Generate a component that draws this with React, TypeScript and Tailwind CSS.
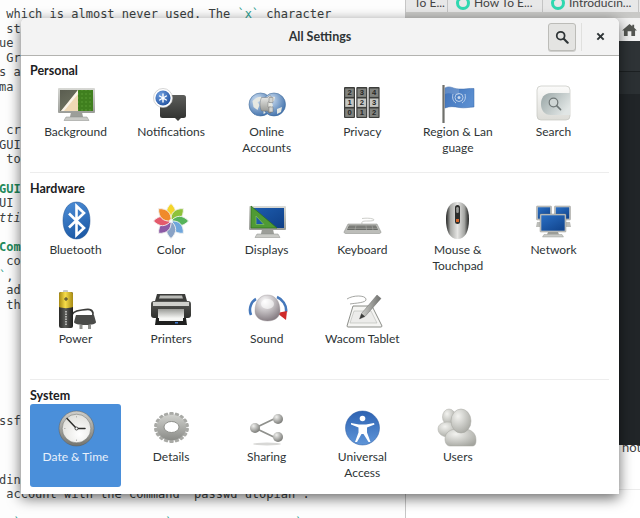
import type { ReactNode } from "react";

const Icon = ({ children }: { children: ReactNode }) => (
  <svg viewBox="0 0 40 40" className="w-10 h-10 shrink-0 overflow-visible">
    {children}
  </svg>
);

const Grad = ({ id, a, b, x2 = 0, y2 = 1 }: { id: string; a: string; b: string; x2?: number; y2?: number }) => (
  <linearGradient id={id} x1="0" y1="0" x2={x2} y2={y2}>
    <stop offset="0" stopColor={a} />
    <stop offset="1" stopColor={b} />
  </linearGradient>
);

const Ball = ({ id, a, b, fx = 0.35, fy = 0.3 }: { id: string; a: string; b: string; fx?: number; fy?: number }) => (
  <radialGradient id={id} cx={fx} cy={fy} r="0.8">
    <stop offset="0" stopColor={a} />
    <stop offset="1" stopColor={b} />
  </radialGradient>
);

const Stand = ({ y = 28 }: { y?: number }) => (
  <g>
    <path d={`M15 ${y}h11l1 5H14z`} fill="#9c9e99" />
    <path d={`M10 ${y + 5}h21l2 3.5H8z`} fill="#c9cac6" stroke="#8b8d88" strokeWidth=".5" />
  </g>
);

const BackgroundIcon = () => (
  <Icon>
    <defs>
      <Grad id="bz" a="#d8d9d5" b="#9b9d98" />
      <Grad id="bl" a="#5a5d50" b="#7c806c" x2={1} />
      <pattern id="gr" width="4" height="4" patternUnits="userSpaceOnUse">
        <rect width="4" height="4" fill="#3f7f1e" />
        <circle cx="2" cy="2" r="1.100" fill="#4e8f2a" />
      </pattern>
    </defs>
    <Stand />
    <rect x="2" y="4" width="37" height="25" rx="1" fill="url(#bz)" />
    <rect x="4" y="6" width="33" height="21" fill="url(#bl)" />
    <rect x="22" y="6" width="15" height="21" fill="url(#gr)" />
    <path d="M22 6v21H5z" fill="#efd9b5" />
    <path d="M22 6L5 27h3L22 10z" fill="#fff" opacity=".7" />
  </Icon>
);

const NotificationsIcon = () => (
  <Icon>
    <defs>
      <Grad id="nb" a="#5d5e5b" b="#333432" />
      <Ball id="nc" a="#6f9fe0" b="#1f4f9d" />
    </defs>
    <rect x="9" y="11" width="26" height="23" rx="2.5" fill="url(#nb)" />
    <path d="M24 34h6l-3 3z" fill="#3a3b39" />
    <circle cx="12" cy="14" r="9.5" fill="#fff" stroke="#b8b8b8" strokeWidth=".6" />
    <circle cx="12" cy="14" r="7.6" fill="url(#nc)" />
    <path d="M12 10v8M8.6 12l6.8 4M8.6 16l6.8-4" stroke="#fff" strokeWidth="1.4" strokeLinecap="round" />
  </Icon>
);

const Globe = ({ cx }: { cx: number }) => (
  <g>
    <circle cx={cx} cy="20.5" r="11.5" fill="url(#og)" stroke="#456f9e" strokeWidth=".6" />
    <path
      d={`M${cx - 8} ${17}c3-3 7-5 9-4l-1 4-3 1 2 3-2 5-4-3zM${cx + 3} ${25}l5-2-1 5-4 2z`}
      fill="#e6e8e2"
    />
  </g>
);

const OnlineIcon = () => (
  <Icon>
    <defs>
      <Ball id="og" a="#cfe0f2" b="#3568a6" />
      <Grad id="op" a="#eeeeec" b="#8f918c" />
    </defs>
    <Globe cx={13.5} />
    <Globe cx={27} />
    <path d="M14.500 13.500h6l1.500-1.500h2v6h-3v5h3v6h-2l-1.500-2h-6c-2-4-2-9.500 0-13.500z" fill="url(#op)" stroke="#666" strokeWidth=".4" />
    <path d="M22 13.500h4v5h-4zM22 23h4v5h-4z" fill="#d3d4d0" stroke="#666" strokeWidth=".4" />
  </Icon>
);

const Dial = ({ x, d }: { x: number; d: string[] }) => (
  <g>
    <rect x={x} y="3" width="11" height="31" rx="1" fill="#3c3d3b" />
    {d.map((n, i) => (
      <g key={i}>
        <rect x={x + 1.2} y={4.5 + i * 10} width="8.6" height="8.4" fill={i === 1 ? "#c6c7c3" : "#81837f"} />
        <text x={x + 5.5} y={11.4 + i * 10} textAnchor="middle" fontSize="7.6" fontWeight="700" fontFamily="Liberation Sans" fill="#272826">
          {n}
        </text>
      </g>
    ))}
  </g>
);

const PrivacyIcon = () => (
  <Icon>
    <Dial x={2} d={["2", "1", "0"]} />
    <Dial x={14.3} d={["3", "2", "1"]} />
    <Dial x={26.6} d={["4", "3", "2"]} />
  </Icon>
);

const RegionIcon = () => (
  <Icon>
    <defs>
      <Grad id="rf" a="#3f72ba" b="#5a8ed0" x2={1} y2={0.4} />
    </defs>
    <path d="M7 4c5-3 8 1 14 1 6 .5 10-1 15-.5V23c-5 0-9 1.500-15 .5-5-1-9-1.500-14 .5z" fill="url(#rf)" stroke="#3a68a8" strokeWidth=".5" />
    <path d="M7 4c5-3 8 1 14 1v6c-6 0-9-3-14-1z" fill="#fff" opacity=".16" />
    <circle cx="21" cy="13.500" r="4" fill="none" stroke="#c9d9ee" strokeWidth=".9" />
    <circle cx="21" cy="13.500" r="1.500" fill="#c9d9ee" />
    <path d="M15 10c-1 4 0 7 3 9M27 10c1 4 0 7-3 9" fill="none" stroke="#c9d9ee" strokeWidth=".9" />
    <rect x="4" y="1" width="2.600" height="38" fill="#6f706c" />
    <rect x="4" y="1" width="1" height="38" fill="#a8a9a5" />
  </Icon>
);

const SearchIcon = () => (
  <Icon>
    <defs>
      <Grad id="sb" a="#fbfbfa" b="#dcdcd7" />
      <Grad id="si" a="#99a6a6" b="#e1e6e5" x2={1} y2={0.6} />
    </defs>
    <rect x="4" y="2" width="33" height="34" rx="4" fill="url(#sb)" stroke="#c4c5c0" strokeWidth=".7" />
    <path d="M37 9H18C11 9 8 14 8 20s3 11 10 11h19z" fill="url(#si)" />
    <circle cx="20.500" cy="18.500" r="4.300" fill="#cfd6d5" stroke="#6e7676" strokeWidth="1.200" />
    <path d="M23.600 21.600l4 4" stroke="#6e7676" strokeWidth="1.500" strokeLinecap="round" />
  </Icon>
);

const BluetoothIcon = () => (
  <Icon>
    <defs>
      <Grad id="bt" a="#4f8fd8" b="#1e5ca8" x2={0.3} />
    </defs>
    <path d="M20.500 0C29 0 34 8 34 18.500S29 37 20.500 37 7 29 7 18.500 12 0 20.500 0z" fill="url(#bt)" stroke="#1c4f8f" strokeWidth=".5" />
    <path d="M13 11.500l15 14.500-7.500 7V4l7.500 7L13 25.500" fill="none" stroke="#fff" strokeWidth="2.600" strokeLinejoin="miter" />
  </Icon>
);

const petals = ["#f4d52b", "#8fc23a", "#57b35a", "#6fa6dc", "#8aa3c6", "#8d5aa5", "#e45a6c", "#f08a2a"];

const ColorIcon = () => (
  <Icon>
    <circle cx="20" cy="19" r="17" fill="#fff" />
    {petals.map((c, i) => (
      <path
        key={c}
        d="M20 19c-6-5-6.500-11.500 0-17.500c6.500 6 6 12.500 0 17.500z"
        fill={c}
        stroke="#f2f2f0"
        strokeWidth=".9"
        transform={`rotate(${i * 45} 20 19)`}
      />
    ))}
    <circle cx="20" cy="19" r="2" fill="#fff" opacity=".7" />
  </Icon>
);

const DisplaysIcon = () => (
  <Icon>
    <defs>
      <Grad id="ds" a="#1d5db0" b="#0f3f86" x2={1} y2={1} />
      <Grad id="bz2" a="#dadbd7" b="#9a9c97" />
    </defs>
    <Stand y={27} />
    <rect x="2" y="4" width="37" height="24" rx="1" fill="url(#bz2)" />
    <rect x="4" y="6" width="33" height="20" fill="url(#ds)" />
    <path d="M4 4l26 22H4z" fill="#4f9a34" stroke="#2f6f1c" strokeWidth=".7" />
    <path d="M9 14l8 8.500H9z" fill="#1b5aa8" stroke="#7fbb5d" strokeWidth=".8" />
  </Icon>
);

const KeyboardIcon = () => (
  <Icon>
    <path d="M20 22c-1-3 2-3 6-3s8-.5 5-2c-3-1-7-1-11-.5" fill="none" stroke="#c0c1bd" strokeWidth=".8" />
    <path d="M6 22h29l4 8c0 1-1 1.500-2 1.500H4c-1 0-2-.5-2-1.500z" fill="#bcbdb9" stroke="#858782" strokeWidth=".5" />
    <path d="M7 23.500h27l2 4.500H5z" fill="#6a6c68" />
    <path d="M7 25h27.500M6 26.500h29M14 23.500l-1 4.500M24 23.500l.5 4.500M30 23.500l1 4.500" stroke="#b9bab6" strokeWidth=".45" />
  </Icon>
);

const MouseIcon = () => (
  <Icon>
    <defs>
      <linearGradient id="mo" x1="0" x2="1" y1="0" y2="0">
        <stop offset="0" stopColor="#1f201f" />
        <stop offset=".2" stopColor="#a9aaa7" />
        <stop offset=".5" stopColor="#e6e6e4" />
        <stop offset=".8" stopColor="#a4a5a2" />
        <stop offset="1" stopColor="#1f201f" />
      </linearGradient>
    </defs>
    <path d="M19.500 0C27 0 31 6 31 17c0 13-4 20-11.500 20S8 30 8 17C8 6 12 0 19.500 0z" fill="url(#mo)" />
    <rect x="17" y="3" width="5" height="19" rx="2.500" fill="#2c2d2b" />
    <rect x="18.200" y="5" width="2.600" height="6" rx="1.300" fill="#9a9b98" />
    <rect x="18" y="17" width="3" height="3" fill="#d4642a" />
  </Icon>
);

const Mon = ({ x, y, w, h }: { x: number; y: number; w: number; h: number }) => (
  <g>
    <rect x={x} y={y} width={w} height={h} rx=".8" fill="#c5c6c2" stroke="#858782" strokeWidth=".4" />
    <rect x={x + 1.300} y={y + 1.300} width={w - 2.600} height={h - 2.600} fill="url(#ne)" />
  </g>
);

const NetworkIcon = () => (
  <Icon>
    <defs>
      <Grad id="ne" a="#2a6fc4" b="#12468f" x2={0.8} />
    </defs>
    <Mon x={3.500} y={4} w={15} h={14} />
    <Mon x={21.500} y={4} w={16} h={14} />
    <path d="M4 20h8v5H3zM28 20h9l1 5h-10z" fill="#bcbdb9" />
    <Mon x={7} y={12} w={26} h={18} />
    <path d="M15 30h10l1 2.500H14z" fill="#9c9e99" />
    <path d="M11 32.500h18l1.500 2.500H9.500z" fill="#c9cac6" stroke="#8b8d88" strokeWidth=".4" />
  </Icon>
);

const PowerIcon = () => (
  <Icon>
    <defs>
      <linearGradient id="pb" x1="0" x2="1" y1="0" y2="0">
        <stop offset="0" stopColor="#2a2a28" />
        <stop offset=".45" stopColor="#5b5c59" />
        <stop offset="1" stopColor="#1e1e1d" />
      </linearGradient>
      <linearGradient id="py" x1="0" x2="1" y1="0" y2="0">
        <stop offset="0" stopColor="#a68812" />
        <stop offset=".45" stopColor="#f7dd4a" />
        <stop offset="1" stopColor="#a78a14" />
      </linearGradient>
    </defs>
    <path d="M16 28c-1-6 2-8 10-9 7-1 10-1 11 3 .5 2-.5 3-1.500 4" fill="none" stroke="#3b3c3a" strokeWidth="1.700" />
    <path d="M20 24h18l2 7c0 2-4 3-10.500 3S18 33 18 31z" fill="#4a4b49" />
    <rect x="23.500" y="34" width="3" height="4" fill="#8f908c" />
    <rect x="32" y="34" width="3" height="4" fill="#8f908c" />
    <rect x="7" y="-1" width="5" height="3" rx="1" fill="#c9c9c5" />
    <rect x="3" y="1" width="14" height="36" rx="2" fill="url(#pb)" />
    <path d="M3 3a2 2 0 012-2h10a2 2 0 012 2v13c-4 1.500-10 1.500-14 0z" fill="url(#py)" />
    <path d="M8 8h4M10 6v4" stroke="#333" strokeWidth=".9" />
    <path d="M10 20v14" stroke="#c8c9c5" strokeWidth="1.600" strokeDasharray="1.500 1" />
  </Icon>
);

const PrintersIcon = () => (
  <Icon>
    <defs>
      <Grad id="pr" a="#565754" b="#2e2f2d" />
      <Grad id="pp" a="#9a9b97" b="#f4f4f2" />
    </defs>
    <path d="M6 3h28l2 7H4z" fill="#3b3c3a" />
    <path d="M9 4.500h22l1 3H8z" fill="#b9bab6" />
    <path d="M3 10h34c2 0 3 1 3 3v11c0 2-1 3-3 3H3c-2 0-3-1-3-3V13c0-2 1-3 3-3z" fill="url(#pr)" />
    <rect x="2" y="11" width="36" height="4" fill="#cfd0cc" />
    <path d="M7 18h26v9H7z" fill="url(#pp)" />
    <path d="M5 27h30l1 7H4z" fill="#1f201f" />
    <path d="M8 27h24v3H8z" fill="#f6f6f4" />
    <rect x="24" y="31" width="3" height="1.500" fill="#3f7ad0" />
  </Icon>
);

const SoundIcon = () => (
  <Icon>
    <defs>
      <Ball id="sk" a="#ffffff" b="#7f767c" fx={0.4} fy={0.25} />
    </defs>
    <path d="M4 24C1 17 5 10 9 8M30 6c5 2 10 8 9 15" fill="none" stroke="#4578bb" strokeWidth="2.600" />
    <path d="M30 22l10-2-1 9z" fill="#cf2a2a" />
    <path d="M8 20C8 10 13 4 20.500 4S33 10 33 20c0 6-5 10-12.500 10S8 26 8 20z" fill="url(#sk)" stroke="#9a9398" strokeWidth=".4" />
    <ellipse cx="20.500" cy="13" rx="6.500" ry="5" fill="#fff" opacity=".6" />
  </Icon>
);

const WacomIcon = () => (
  <Icon>
    <defs>
      <Grad id="wp" a="#d6d7d3" b="#6f706d" x2={1} y2={0} />
    </defs>
    <path d="M5 8c6-4 18-4 19 0 1 4-11 4-16 5" fill="none" stroke="#7e807b" strokeWidth=".7" />
    <path d="M11 15h19l10 20c0 .700-.5 1-1 1H6c-.5 0-1-.3-1-1z" fill="#f5f5f3" stroke="#7f817c" strokeWidth=".9" />
    <path d="M12 20h17l6 12H8z" fill="#ececea" stroke="#b7b8b4" strokeWidth=".6" />
    <path d="M35 4l4 3.500-16 18-5.500 2.500 2-5.500z" fill="url(#wp)" stroke="#555" strokeWidth=".4" />
    <path d="M17.500 28l2-5.500 3.500 3z" fill="#3b3c3a" />
  </Icon>
);

const ClockIcon = () => (
  <Icon>
    <defs>
      <Grad id="cr" a="#cfcfcb" b="#73746f" />
      <Ball id="cf" a="#ffffff" b="#dcdcd7" fx={0.6} fy={0.7} />
    </defs>
    <circle cx="20.500" cy="19.500" r="17.500" fill="url(#cr)" stroke="#5c5d59" strokeWidth=".5" />
    <circle cx="20.500" cy="19.500" r="14.300" fill="url(#cf)" stroke="#6b6c68" strokeWidth=".5" />
    <path d="M20.500 19.500L11 9.500" stroke="#2c2d2b" strokeWidth="1.500" strokeLinecap="round" />
    <path d="M20.500 19.500h8.500" stroke="#2c2d2b" strokeWidth="1.500" strokeLinecap="round" />
    <circle cx="20.500" cy="19.500" r="1.500" fill="#fff" stroke="#2c2d2b" strokeWidth=".8" />
    <path d="M20.500 7v1.500M20.500 30.500V32M8 19.500h1.500" stroke="#a0a19d" strokeWidth=".7" />
  </Icon>
);

const gearTeeth = Array.from({ length: 18 }, (_, i) => i * 20);

const GearIcon = () => (
  <Icon>
    <defs>
      <Grad id="ge" a="#d0d1cd" b="#8a8b87" />
    </defs>
    <g transform="translate(20.500 18.500) scale(1 .88)">
      {gearTeeth.map((a) => (
        <rect key={a} x="-2.200" y="-17.500" width="4.400" height="6" rx="1" fill="#a9aaa6" transform={`rotate(${a})`} />
      ))}
      <circle r="14.500" fill="url(#ge)" />
    </g>
    <ellipse cx="20.500" cy="18" rx="7.500" ry="5.500" fill="#fff" stroke="#7c7d79" strokeWidth=".8" />
  </Icon>
);

const SharingIcon = () => (
  <Icon>
    <defs>
      <Ball id="sh" a="#f0f0ee" b="#6d6e6a" />
    </defs>
    <path d="M8 19L31 8M8 19l23 11" stroke="#8f908c" strokeWidth="1.800" />
    <ellipse cx="20" cy="35" rx="14" ry="1.500" fill="#d8d8d6" />
    <circle cx="8" cy="19" r="5" fill="url(#sh)" />
    <circle cx="31" cy="10" r="5" fill="url(#sh)" />
    <circle cx="31" cy="28" r="5" fill="url(#sh)" />
  </Icon>
);

const UniversalIcon = () => (
  <Icon>
    <defs>
      <Grad id="un" a="#2d62b2" b="#5f95d8" />
    </defs>
    <circle cx="20.500" cy="19" r="17" fill="url(#un)" stroke="#2a5aa0" strokeWidth=".5" />
    <circle cx="20.500" cy="9.500" r="2.800" fill="#fff" />
    <path d="M9 14l8 1.500h7l8-1.500.5 1.500-7.500 3v5l3.500 9.500h-2L21.500 25h-2l-4.500 8h-2l3.500-9.500v-5l-7.500-3z" fill="#fff" />
  </Icon>
);

const UsersIcon = () => (
  <Icon>
    <defs>
      <Ball id="us" a="#f3f3f0" b="#a4a59f" />
    </defs>
    <ellipse cx="11" cy="8" rx="6.500" ry="8" fill="url(#us)" stroke="#b0b1ab" strokeWidth=".5" />
    <path d="M0 20c0-5 5-7 10-7s10 3 10 8-5 7-10 7S0 25 0 20z" fill="url(#us)" stroke="#b0b1ab" strokeWidth=".5" />
    <path d="M7 30c0-7 6-10 12-10h7c7 0 12 4 12 11 0 4-1 6-4 6H12c-3 0-5-3-5-7z" fill="url(#us)" stroke="#a4a59f" strokeWidth=".5" />
    <ellipse cx="23" cy="12" rx="10" ry="12" fill="url(#us)" stroke="#a4a59f" strokeWidth=".5" />
  </Icon>
);

type Item = { label: string; icon: ReactNode; selected?: boolean };

const sections: { title: string; top: string; items: Item[] }[] = [
  {
    title: "Personal",
    top: "pt-[6px]",
    items: [
      { label: "Background", icon: <BackgroundIcon /> },
      { label: "Notifications", icon: <NotificationsIcon /> },
      { label: "Online\nAccounts", icon: <OnlineIcon /> },
      { label: "Privacy", icon: <PrivacyIcon /> },
      { label: "Region & Lan\nguage", icon: <RegionIcon /> },
      { label: "Search", icon: <SearchIcon /> },
    ],
  },
  {
    title: "Hardware",
    top: "pt-[7px]",
    items: [
      { label: "Bluetooth", icon: <BluetoothIcon /> },
      { label: "Color", icon: <ColorIcon /> },
      { label: "Displays", icon: <DisplaysIcon /> },
      { label: "Keyboard", icon: <KeyboardIcon /> },
      { label: "Mouse &\nTouchpad", icon: <MouseIcon /> },
      { label: "Network", icon: <NetworkIcon /> },
      { label: "Power", icon: <PowerIcon /> },
      { label: "Printers", icon: <PrintersIcon /> },
      { label: "Sound", icon: <SoundIcon /> },
      { label: "Wacom Tablet", icon: <WacomIcon /> },
    ],
  },
  {
    title: "System",
    top: "pt-[7px]",
    items: [
      { label: "Date & Time", icon: <ClockIcon />, selected: true },
      { label: "Details", icon: <GearIcon /> },
      { label: "Sharing", icon: <SharingIcon /> },
      { label: "Universal\nAccess", icon: <UniversalIcon /> },
      { label: "Users", icon: <UsersIcon /> },
    ],
  },
];

const editorLines: ReactNode[] = [
  <> which is almost never used. The <span className="text-[#2a9d8f]">`x`</span> character</>,
  " st", "ue", " Gr", "s a", "ma", "", "", " cr", "GUI", " to", "",
  <span className="font-bold text-[#1f8a5b]">GUI</span>,
  "UI",
  <span className="italic">tti</span>,
  "",
  <span className="font-bold text-[#1f8a5b]">Com</span>,
  " co",
  <><span className="text-[#2a9d8f]">`</span>,</>,
  " ad", " th", "", "", "", "", "", "", "", "ssf", "", "", "", "din",
  " account with the command `passwd utopian`.",
  "",
  <span className="text-[#2a9d8f]">  `                    `                 `</span>,
];

const Favicon = () => (
  <svg viewBox="0 0 16 16" className="w-4 h-4 shrink-0 -mt-[5px]">
    <circle cx="8" cy="8" r="5.500" fill="none" stroke="#2fd8b0" strokeWidth="3" />
    <path d="M2 2l4 3-4 2z" fill="#2fd8b0" />
  </svg>
);

const BrowserTab = ({ title, fav, w }: { title: string; fav?: boolean; w: string }) => (
  <div className={`flex h-full shrink-0 items-start gap-[3px] border-r border-[#c4c4c4] pl-[7px] ${w}`}>
    {fav && <Favicon />}
    <span className="-mt-[5px] whitespace-nowrap text-[12px] leading-[16px] text-[#444]">{title}</span>
  </div>
);

export default function App() {
  return (
    <div className="relative flex h-[518px] w-[640px] overflow-hidden bg-white font-['Lato',sans-serif] text-[#2e3436]">
      <div className="h-full w-[406px] shrink-0 overflow-hidden border-r border-[#c6c6c6] bg-[#fdfdfd] pt-[7px] font-['DejaVu_Sans_Mono',monospace] text-[12px] leading-[14.55px] text-[#3a3f41]">
        {editorLines.map((l, i) => (
          <div key={i} className="-ml-px h-[14.55px] whitespace-pre">
            {l}
          </div>
        ))}
      </div>

      <div className="flex h-full flex-1 flex-col overflow-hidden">
        <div className="flex h-[12px] overflow-hidden bg-[#e8e8e8]">
          <BrowserTab title="To E..." w="w-[42px] !pl-[8px]" />
          <BrowserTab title="How To E..." fav w="w-[95px]" />
          <BrowserTab title="Introducin..." fav w="w-[96px]" />
        </div>
        <div className="h-[6px] bg-[#c9c9c7]" />
        <div className="flex h-[23px] items-center justify-end bg-[#f2f2f2] pr-[3px]">
          <svg viewBox="0 0 16 14" className="h-[13px] w-[15px]">
            <path d="M8 1l3 2.500V2h2v3.200L16 8h-2v6h-4V9H6v5H2V8H0z" fill="#555753" />
          </svg>
        </div>
        <div className="h-[31px] border-b border-[#1c2022] bg-[#2e3336]" />
        <div className="h-[22px] bg-[#2b3033]" />
        <div className="h-[351px] bg-[#212528]" />
        <div className="h-[45px] overflow-hidden border-b border-[#ececec] pl-[216px]">
          <div className="-mt-[6px] text-[13px] leading-[16px] text-[#444]">not</div>
        </div>
      </div>

      <div className="absolute left-[21px] top-[18px] flex h-[476px] w-[598px] flex-col rounded-t-[6px] bg-white shadow-[0_4px_14px_rgba(0,0,0,0.6)]">
        <div className="relative flex h-[38px] shrink-0 items-center justify-center rounded-t-[6px] border-b border-[#b3b3b0] bg-[#f3f3f3]">
          <span className="pt-px text-[12.500px] font-bold">All Settings</span>
          <div className="absolute right-[43px] top-[5px] flex h-[28px] w-[28px] items-center justify-center rounded-[3px] border border-[#bcbcb8] bg-[#e4e4e2] shadow-[0_1px_0_#d0d0ce]">
            <svg viewBox="0 0 16 16" className="h-[14px] w-[14px]" fill="none" stroke="#2e3436">
              <circle cx="6.500" cy="6.500" r="4.500" strokeWidth="2" />
              <path d="M10 10l4.500 4.500" strokeWidth="2.400" strokeLinecap="round" />
            </svg>
          </div>
          <div className="absolute right-[37px] top-[5px] h-[28px] w-px bg-[#e0e0de]" />
          <svg viewBox="0 0 10 10" className="absolute right-[14px] top-[14px] h-[9px] w-[9px]" stroke="#2e3436" strokeWidth="2.200">
            <path d="M1.500 1.500l7 7M8.500 1.500l-7 7" />
          </svg>
        </div>
        <div className="flex flex-col pl-[9px] pr-[10px]">
          {sections.map((s, i) => (
            <section key={s.title} className={`${s.top} ${i < 2 ? "border-b border-[#ededed] pb-[10px]" : ""}`}>
              <h2 className="h-[17px] pt-px text-[12.500px] font-bold leading-[16px] text-[#1c2022]">{s.title}</h2>
              <div className="grid grid-cols-[repeat(6,91px)] gap-x-[4.600px] gap-y-[6px]">
                {s.items.map((it) => (
                  <div
                    key={it.label}
                    className={`flex h-[83px] flex-col items-center rounded-[3px] pt-[5px] ${it.selected ? "bg-[#4a8fda] text-[#e8f0fa]" : ""}`}
                  >
                    {it.icon}
                    <div className="whitespace-pre-line text-center text-[12px] leading-[16px]">{it.label}</div>
                  </div>
                ))}
              </div>
            </section>
          ))}
        </div>
      </div>
    </div>
  );
}
